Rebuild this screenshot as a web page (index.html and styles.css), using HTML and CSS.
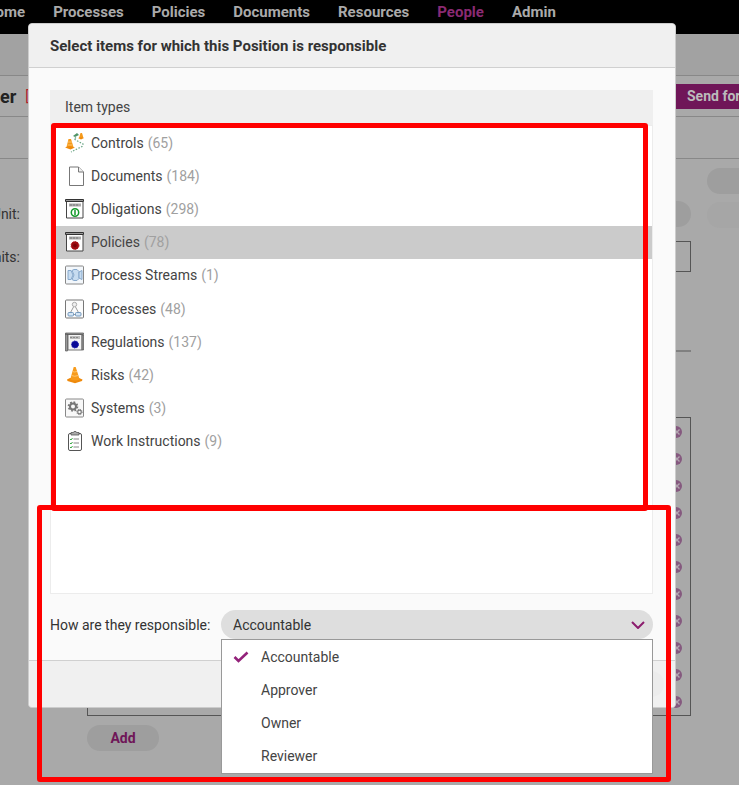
FILE: index.html
```html
<!DOCTYPE html>
<html lang="en">
<head>
  <meta charset="UTF-8" />
  <meta name="viewport" content="width=device-width, initial-scale=1.0" />
  <title>Position responsibilities</title>
  <link rel="stylesheet" href="styles.css">
</head>
<body>
  <nav class="main-nav">
    <a href="#">Home</a>
    <a href="#">Processes</a>
    <a href="#">Policies</a>
    <a href="#">Documents</a>
    <a href="#">Resources</a>
    <a href="#" class="active">People</a>
    <a href="#">Admin</a>
  </nav>
  <div class="crumb-bar"></div>
  <header class="title-bar">
    <h1>er</h1>
    <span class="draft">[</span>
    <button class="send-btn" type="button">Send for</button>
  </header>
  <div class="tab-bar"></div>

  <main class="page">
    <div class="form">
      <div class="field unit">
        <label for="unit">Unit:</label>
        <button class="pill" id="unit" type="button"></button>
      </div>
      <div class="field units">
        <label for="units">Units:</label>
        <input type="text" id="units">
      </div>
      <hr>
      <svg class="defs">
        <symbol id="remove" viewBox="0 0 12 12">
          <circle cx="6" cy="6" r="6" fill="#85597f"/>
          <path d="M4.500 3.500l5 5M9.500 3.500l-5 5" stroke="#b3a6b1" stroke-width="1.400"/>
        </symbol>
      </svg>
      <ul class="links">
        <li><svg><use href="#remove"/></svg></li>
        <li><svg><use href="#remove"/></svg></li>
        <li><svg><use href="#remove"/></svg></li>
        <li><svg><use href="#remove"/></svg></li>
        <li><svg><use href="#remove"/></svg></li>
        <li><svg><use href="#remove"/></svg></li>
        <li><svg><use href="#remove"/></svg></li>
        <li><svg><use href="#remove"/></svg></li>
        <li><svg><use href="#remove"/></svg></li>
        <li><svg><use href="#remove"/></svg></li>
        <li><svg><use href="#remove"/></svg></li>
      </ul>
      <button class="pill add-btn" type="button">Add</button>
    </div>
    <div class="side">
      <button class="pill" type="button" aria-label="Edit"></button>
      <button class="pill" type="button" aria-label="Remove" disabled></button>
    </div>
  </main>

  <div class="backdrop">
    <div class="modal" role="dialog" aria-labelledby="modalTitle">
      <h2 class="modal-header" id="modalTitle">Select items for which this Position is responsible</h2>
      <div class="modal-body">
        <div class="list-head">Item types</div>
        <div class="list">
          <div class="types">
            <button class="type" type="button">
              <svg class="icon" viewBox="0 0 19 20">
                <path d="M3.500 6h2.500l2.500 8H1.500z" fill="#f59a1b"/>
                <path d="M3 9h4M2.500 12h5" stroke="#ffc46a" fill="none"/>
                <path d="M0 14.500l4.500-1.500 5.500 1.500-4.500 2z" fill="#ef8a0c"/>
                <path d="M15.500 0h1.500l1.500 5H14z" fill="#f59a1b"/>
                <path d="M13 5l3-.8 3 .8-3 1.500z" fill="#ef8a0c"/>
                <path d="M11 4.500L9 6l9 5-1 2.500-11 5.500" stroke="#6aa585" stroke-width="1.200" stroke-dasharray="1.500 1.500" fill="none"/>
                <path d="M8 3l4-3 2 2-4 2z" fill="#4f9467"/>
              </svg>
              Controls <span class="count">(65)</span>
            </button>
            <button class="type" type="button">
              <svg class="icon" viewBox="0 0 19 20">
                <path d="M4.500 1h9l5 5v13.500h-14z" fill="#fff" stroke="#777"/>
                <path d="M13.500 1v5h5" fill="#eee" stroke="#777"/>
              </svg>
              Documents <span class="count">(184)</span>
            </button>
            <button class="type" type="button">
              <svg class="icon" viewBox="0 0 19 20">
                <path d="M1.500 3v16h16.500V3" fill="#fff" stroke="#444"/>
                <path d="M.5.500h18v2H.5z" fill="#999" stroke="#333"/>
                <path d="M4 4.500h12v3H4z" fill="#aaa"/>
                <path d="M5 6h9" stroke="#777" stroke-dasharray="2 1"/>
                <circle cx="10" cy="13.500" r="3.700" fill="#fff" stroke="#149a2b" stroke-width="1.500"/>
                <path d="M10 11v5" stroke="#149a2b" stroke-width="1.500"/>
              </svg>
              Obligations <span class="count">(298)</span>
            </button>
            <button class="type selected" type="button">
              <svg class="icon" viewBox="0 0 19 20">
                <path d="M1.500 3v16h16.500V3" fill="#fff" stroke="#444"/>
                <path d="M.5.500h18v2H.5z" fill="#999" stroke="#333"/>
                <path d="M4 4.500h12v3H4z" fill="#aaa"/>
                <path d="M5 6h9" stroke="#777" stroke-dasharray="2 1"/>
                <circle cx="10" cy="13.500" r="3.900" fill="#9d0c12" stroke="#b5161c" stroke-dasharray="1.500 1"/>
                <circle cx="10" cy="13.500" r="1.800" fill="#7b0409"/>
              </svg>
              Policies <span class="count">(78)</span>
            </button>
            <button class="type" type="button">
              <svg class="icon" viewBox="0 0 19 20">
                <rect x=".5" y="1" width="18" height="18" rx="1" fill="#f3f7fb" stroke="#888"/>
                <path d="M3 5.500h3l2 4.500-2 4.500H3z" fill="#c7dcf0" stroke="#86a8cc"/>
                <path d="M7 5.500l2-1h3l2 2v7l-2 2H9l-2-1 2-4.500z" fill="#c7dcf0" stroke="#86a8cc"/>
                <path d="M14 7l3-1.500v9L14 13z" fill="#c7dcf0" stroke="#86a8cc"/>
              </svg>
              Process Streams <span class="count">(1)</span>
            </button>
            <button class="type" type="button">
              <svg class="icon" viewBox="0 0 19 20">
                <rect x=".5" y="1" width="18" height="18" rx="1" fill="#fbfbfb" stroke="#777"/>
                <circle cx="9.500" cy="5.500" r="2.200" fill="#eee" stroke="#aaa"/>
                <path d="M8.500 8l-3 5.500M10.500 8l3 5.500M8.500 15.500h2" stroke="#999" fill="none"/>
                <rect x="3" y="13.500" width="5.500" height="3.500" rx="1" fill="#d6e6f5" stroke="#7398bd"/>
                <rect x="10.500" y="13.500" width="5.500" height="3.500" rx="1" fill="#d6e6f5" stroke="#7398bd"/>
              </svg>
              Processes <span class="count">(48)</span>
            </button>
            <button class="type" type="button">
              <svg class="icon" viewBox="0 0 19 20">
                <path d="M3 2.500h14V18H3z" fill="#f4f4f4" stroke="#777"/>
                <path d="M.5 1h18v1.500H.5zM.5 2v17h2V2zM17 3h1.500v15H17z" fill="#999" stroke="#555" stroke-width=".7"/>
                <path d="M5 4h10v3H5z" fill="#bbb"/>
                <path d="M5 5.500h9" stroke="#888" stroke-dasharray="2 1"/>
                <circle cx="10" cy="12.500" r="3.500" fill="#090996" stroke="#2222b5" stroke-dasharray="1.500 1"/>
              </svg>
              Regulations <span class="count">(137)</span>
            </button>
            <button class="type" type="button">
              <svg class="icon" viewBox="0 0 19 20">
                <path d="M2 14.500l3-1.500h9l3.500 1.500-.5 1.500-7 2.200L2.500 16z" fill="#ef8a0c"/>
                <path d="M8.700 2h2l4 12.500q-4.500 2-9.500 0z" fill="#f79b1c"/>
                <path d="M7.500 6.500q2 1 4.500 0M6.300 10.500q3.500 1.500 7 0" stroke="#ffc670" fill="none"/>
              </svg>
              Risks <span class="count">(42)</span>
            </button>
            <button class="type" type="button">
              <svg class="icon" viewBox="0 0 19 20">
                <rect x=".5" y="1" width="18" height="18" rx="1" fill="#f8f8f8" stroke="#888"/>
                <circle cx="8" cy="8.500" r="4.300" fill="none" stroke="#777" stroke-width="2" stroke-dasharray="1.700 1.677"/>
                <circle cx="8" cy="8.500" r="3" fill="none" stroke="#777" stroke-width="2"/>
                <circle cx="14.500" cy="14" r="2.700" fill="none" stroke="#777" stroke-dasharray="1.100 1.020"/>
                <circle cx="14.500" cy="14" r="1.800" fill="none" stroke="#777" stroke-width="1.200"/>
              </svg>
              Systems <span class="count">(3)</span>
            </button>
            <button class="type" type="button">
              <svg class="icon" viewBox="0 0 19 20">
                <rect x="3.500" y="2.500" width="13" height="17" rx="1.500" fill="#fff" stroke="#555"/>
                <path d="M6 4V1.500h2.500L9 .5h2l.5 1H14V4z" fill="#aaa" stroke="#555" stroke-width=".8"/>
                <path d="M8.500 8h5.500M8.500 12h5.500M8.500 16h5.500" stroke="#888"/>
                <path d="M5 8l1 1 1.500-2M5 12l1 1 1.500-2M5 16l1 1 1.500-2" stroke="#3aa845" fill="none"/>
              </svg>
              Work Instructions <span class="count">(9)</span>
            </button>
          </div>
        </div>
        <div class="responsible">
          <label for="role">How are they responsible:</label>
          <div class="dropdown">
            <select id="role">
              <option>Accountable</option>
              <option>Approver</option>
              <option>Owner</option>
              <option>Reviewer</option>
            </select>
            <svg class="chevron" viewBox="0 0 14 8"><path d="M1 1l6 6 6-6" fill="none" stroke="#8c1d6e" stroke-width="2"/></svg>
            <ul class="menu">
              <li>
                <svg class="tick" viewBox="0 0 16 12"><path d="M1.500 6l4 4L14.500 1.500" fill="none" stroke="#93227a" stroke-width="2.600"/></svg>
                Accountable
              </li>
              <li>Approver</li>
              <li>Owner</li>
              <li>Reviewer</li>
            </ul>
          </div>
        </div>
      </div>
      <div class="modal-footer">
        <button class="ok-btn" type="button" aria-label="OK" disabled></button>
      </div>
    </div>
    <div class="highlight highlight-types"></div>
    <div class="highlight highlight-role"></div>
  </div>
</body>
</html>
```
FILE: styles.css
```css
* {
  box-sizing: border-box;
}
body {
  margin: 0;
  background-color: #a9a9a9;
  color: #333;
  font-family: Roboto, "Liberation Sans", sans-serif;
  font-size: 14px;
  overflow-x: hidden;
}
button, input, select {
  font: inherit;
  color: inherit;
  border: none;
  margin: 0;
  padding: 0;
}
ul {
  list-style: none;
  margin: 0;
  padding: 0;
}

/* page behind the dialog */
.main-nav {
  display: flex;
  gap: 28px;
  height: 34px;
  margin-left: -15px;
  padding-top: 3px;
  background-color: #000;
  font-size: 15px;
  font-weight: bold;
  line-height: 18px;
}
.main-nav a {
  color: #aaa;
  text-decoration: none;
}
.main-nav a.active {
  color: #8a2a73;
}
.crumb-bar {
  height: 42px;
  background-color: #a2a2a2;
  border-bottom: 1px solid #888;
}
.title-bar {
  display: flex;
  align-items: center;
  height: 41px;
  border-bottom: 1px solid #888;
}
.title-bar h1 {
  margin: 0;
  font-size: 18px;
  color: #222;
}
.draft {
  margin-left: 9px;
  color: #b3202c;
}
.send-btn {
  width: 64px;
  height: 25px;
  margin-left: auto;
  padding-left: 12px;
  background-color: #6f1658;
  color: #bbb;
  font-weight: bold;
  text-align: left;
  white-space: nowrap;
}
.tab-bar {
  height: 42px;
  border-bottom: 1px solid #888;
}
.page {
  display: flex;
  gap: 16px;
}
.form {
  flex: 1;
}
.field {
  display: flex;
  align-items: center;
  gap: 67px;
}
.field label {
  display: flex;
  justify-content: flex-end;
  width: 20px;
  flex: none;
}
.unit {
  margin-top: 42px;
}
.units {
  margin-top: 14px;
}
.field .pill {
  flex: 1;
}
.field input {
  flex: 1;
  height: 31px;
  background: none;
  border: 1px solid #555;
}
.pill {
  height: 26px;
  border-radius: 13px;
  background-color: #9e9e9e;
}
.pill:disabled {
  background-color: #a6a6a6;
}
hr {
  height: 2px;
  margin: 78px 0 0 87px;
  border: none;
  background-color: #808080;
}
.defs {
  display: none;
}
.links {
  height: 299px;
  margin: 65px 0 0 87px;
  padding: 8px 8px 0 0;
  border: 1px solid #555;
}
.links li {
  display: flex;
  justify-content: flex-end;
  margin-bottom: 15px;
}
.links svg {
  width: 12px;
  height: 12px;
}
.add-btn {
  width: 72px;
  margin: 9px 0 0 87px;
  color: #6f1658;
  font-weight: bold;
}
.side {
  display: flex;
  flex-direction: column;
  gap: 8px;
  width: 32px;
  padding-top: 9px;
}
.side .pill {
  border-radius: 13px 0 0 13px;
}

/* dialog */
.backdrop {
  position: absolute;
  top: 0;
  left: 0;
  right: 0;
  padding: 23px 63px 0 28px;
}
.modal {
  border: 1px solid #ccc;
  border-radius: 4px;
  background-color: #fafafa;
}
.modal-header {
  height: 44px;
  margin: 0;
  padding-left: 21px;
  border-bottom: 1px solid #d0d0d0;
  border-radius: 4px 4px 0 0;
  background-color: #f0f0f0;
  font-size: 15px;
  line-height: 44px;
}
.modal-body {
  padding: 22px 22px 21px 21px;
}
.list-head {
  height: 35px;
  padding-left: 15px;
  background-color: #efefef;
  color: #444;
  line-height: 35px;
}
.list {
  min-height: 469px;
  border: 1px solid #ececec;
  background-color: #fff;
}
.types {
  display: flex;
  flex-direction: column;
  height: 332px;
}
.type {
  display: flex;
  flex: 1;
  align-items: center;
  padding-left: 14px;
  background: none;
  color: #444;
}
.type.selected {
  background-color: #cbcbcb;
}
.icon {
  width: 19px;
  height: 20px;
  margin-right: 7px;
}
.count {
  margin-left: 4px;
  color: #a0a0a0;
}
.responsible {
  display: flex;
  align-items: center;
  margin-top: 16px;
}
.responsible label {
  width: 171px;
}
.dropdown {
  position: relative;
  flex: 1;
}
.dropdown select {
  display: block;
  width: 100%;
  height: 29px;
  padding-left: 12px;
  border-radius: 15px;
  background-color: #dedede;
  appearance: none;
}
.chevron {
  position: absolute;
  top: 11px;
  right: 8px;
  width: 14px;
  height: 8px;
}
.menu {
  position: absolute;
  top: 100%;
  left: 0;
  right: 0;
  display: flex;
  flex-direction: column;
  height: 135px;
  border: 1px solid #999;
  background-color: #fff;
  color: #444;
}
.menu li {
  display: flex;
  flex: 1;
  align-items: center;
  padding-left: 39px;
}
.tick {
  width: 16px;
  height: 12px;
  margin: 0 12px 0 -28px;
}
.modal-footer {
  display: flex;
  align-items: center;
  justify-content: flex-end;
  height: 47px;
  padding-right: 11px;
  border-top: 1px solid #d0d0d0;
  border-radius: 0 0 4px 4px;
  background-color: #f0f0f0;
}
.ok-btn {
  width: 72px;
  height: 26px;
  border-radius: 13px;
  background-color: #ececec;
}

/* red callouts */
.highlight {
  position: absolute;
  border: 5px solid #f00;
  border-radius: 3px;
  pointer-events: none;
}
.highlight-types {
  top: 123px;
  left: 51px;
  right: 91px;
  height: 388px;
}
.highlight-role {
  top: 505px;
  left: 37px;
  right: 68px;
  height: 277px;
}
```
